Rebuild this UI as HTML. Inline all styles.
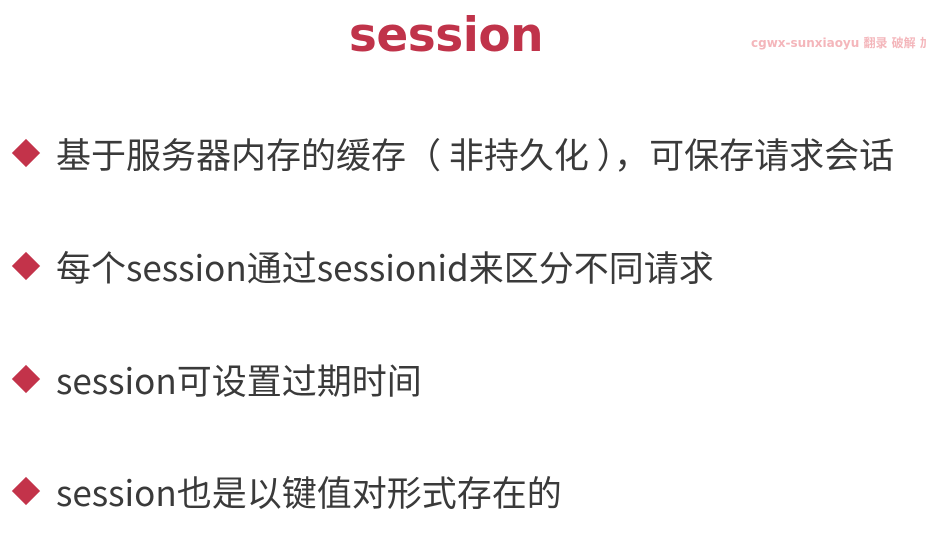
<!DOCTYPE html>
<html><head><meta charset="utf-8"><style>
body{margin:0;width:926px;height:533px;background:#fff;position:relative;overflow:hidden;font-family:"Liberation Sans","Noto Sans CJK SC",sans-serif}
.t{position:absolute;left:0;width:892px;top:8px;text-align:center;font-size:47px;font-weight:bold;color:#c0334a;font-family:"DejaVu Sans","Liberation Sans",sans-serif;letter-spacing:-0.5px}
.w{position:absolute;left:751px;top:34px;font-size:12px;font-weight:bold;color:#f4b6bb;white-space:nowrap;font-family:"DejaVu Sans","Noto Sans CJK SC",sans-serif}
.d{position:absolute;left:16px;width:20px;height:20px;background:#c3334a;transform:rotate(45deg)}
.l{position:absolute;left:56px;font-size:35px;color:#3a3a3a;white-space:nowrap;line-height:40px;font-family:"Noto Sans CJK SC",sans-serif}
</style></head><body>
<div class="t">session</div>
<div class="w">cgwx-sunxiaoyu 翻录 破解 加</div>
<div class="d" style="top:143px"></div><div class="l" style="top:134px">基于服务器内存的缓存（ 非持久化 ），可保存请求会话</div>
<div class="d" style="top:256px"></div><div class="l" style="top:247px">每个session通过sessionid来区分不同请求</div>
<div class="d" style="top:369px"></div><div class="l" style="top:360px">session可设置过期时间</div>
<div class="d" style="top:481px"></div><div class="l" style="top:472px">session也是以键值对形式存在的</div>
</body></html>
